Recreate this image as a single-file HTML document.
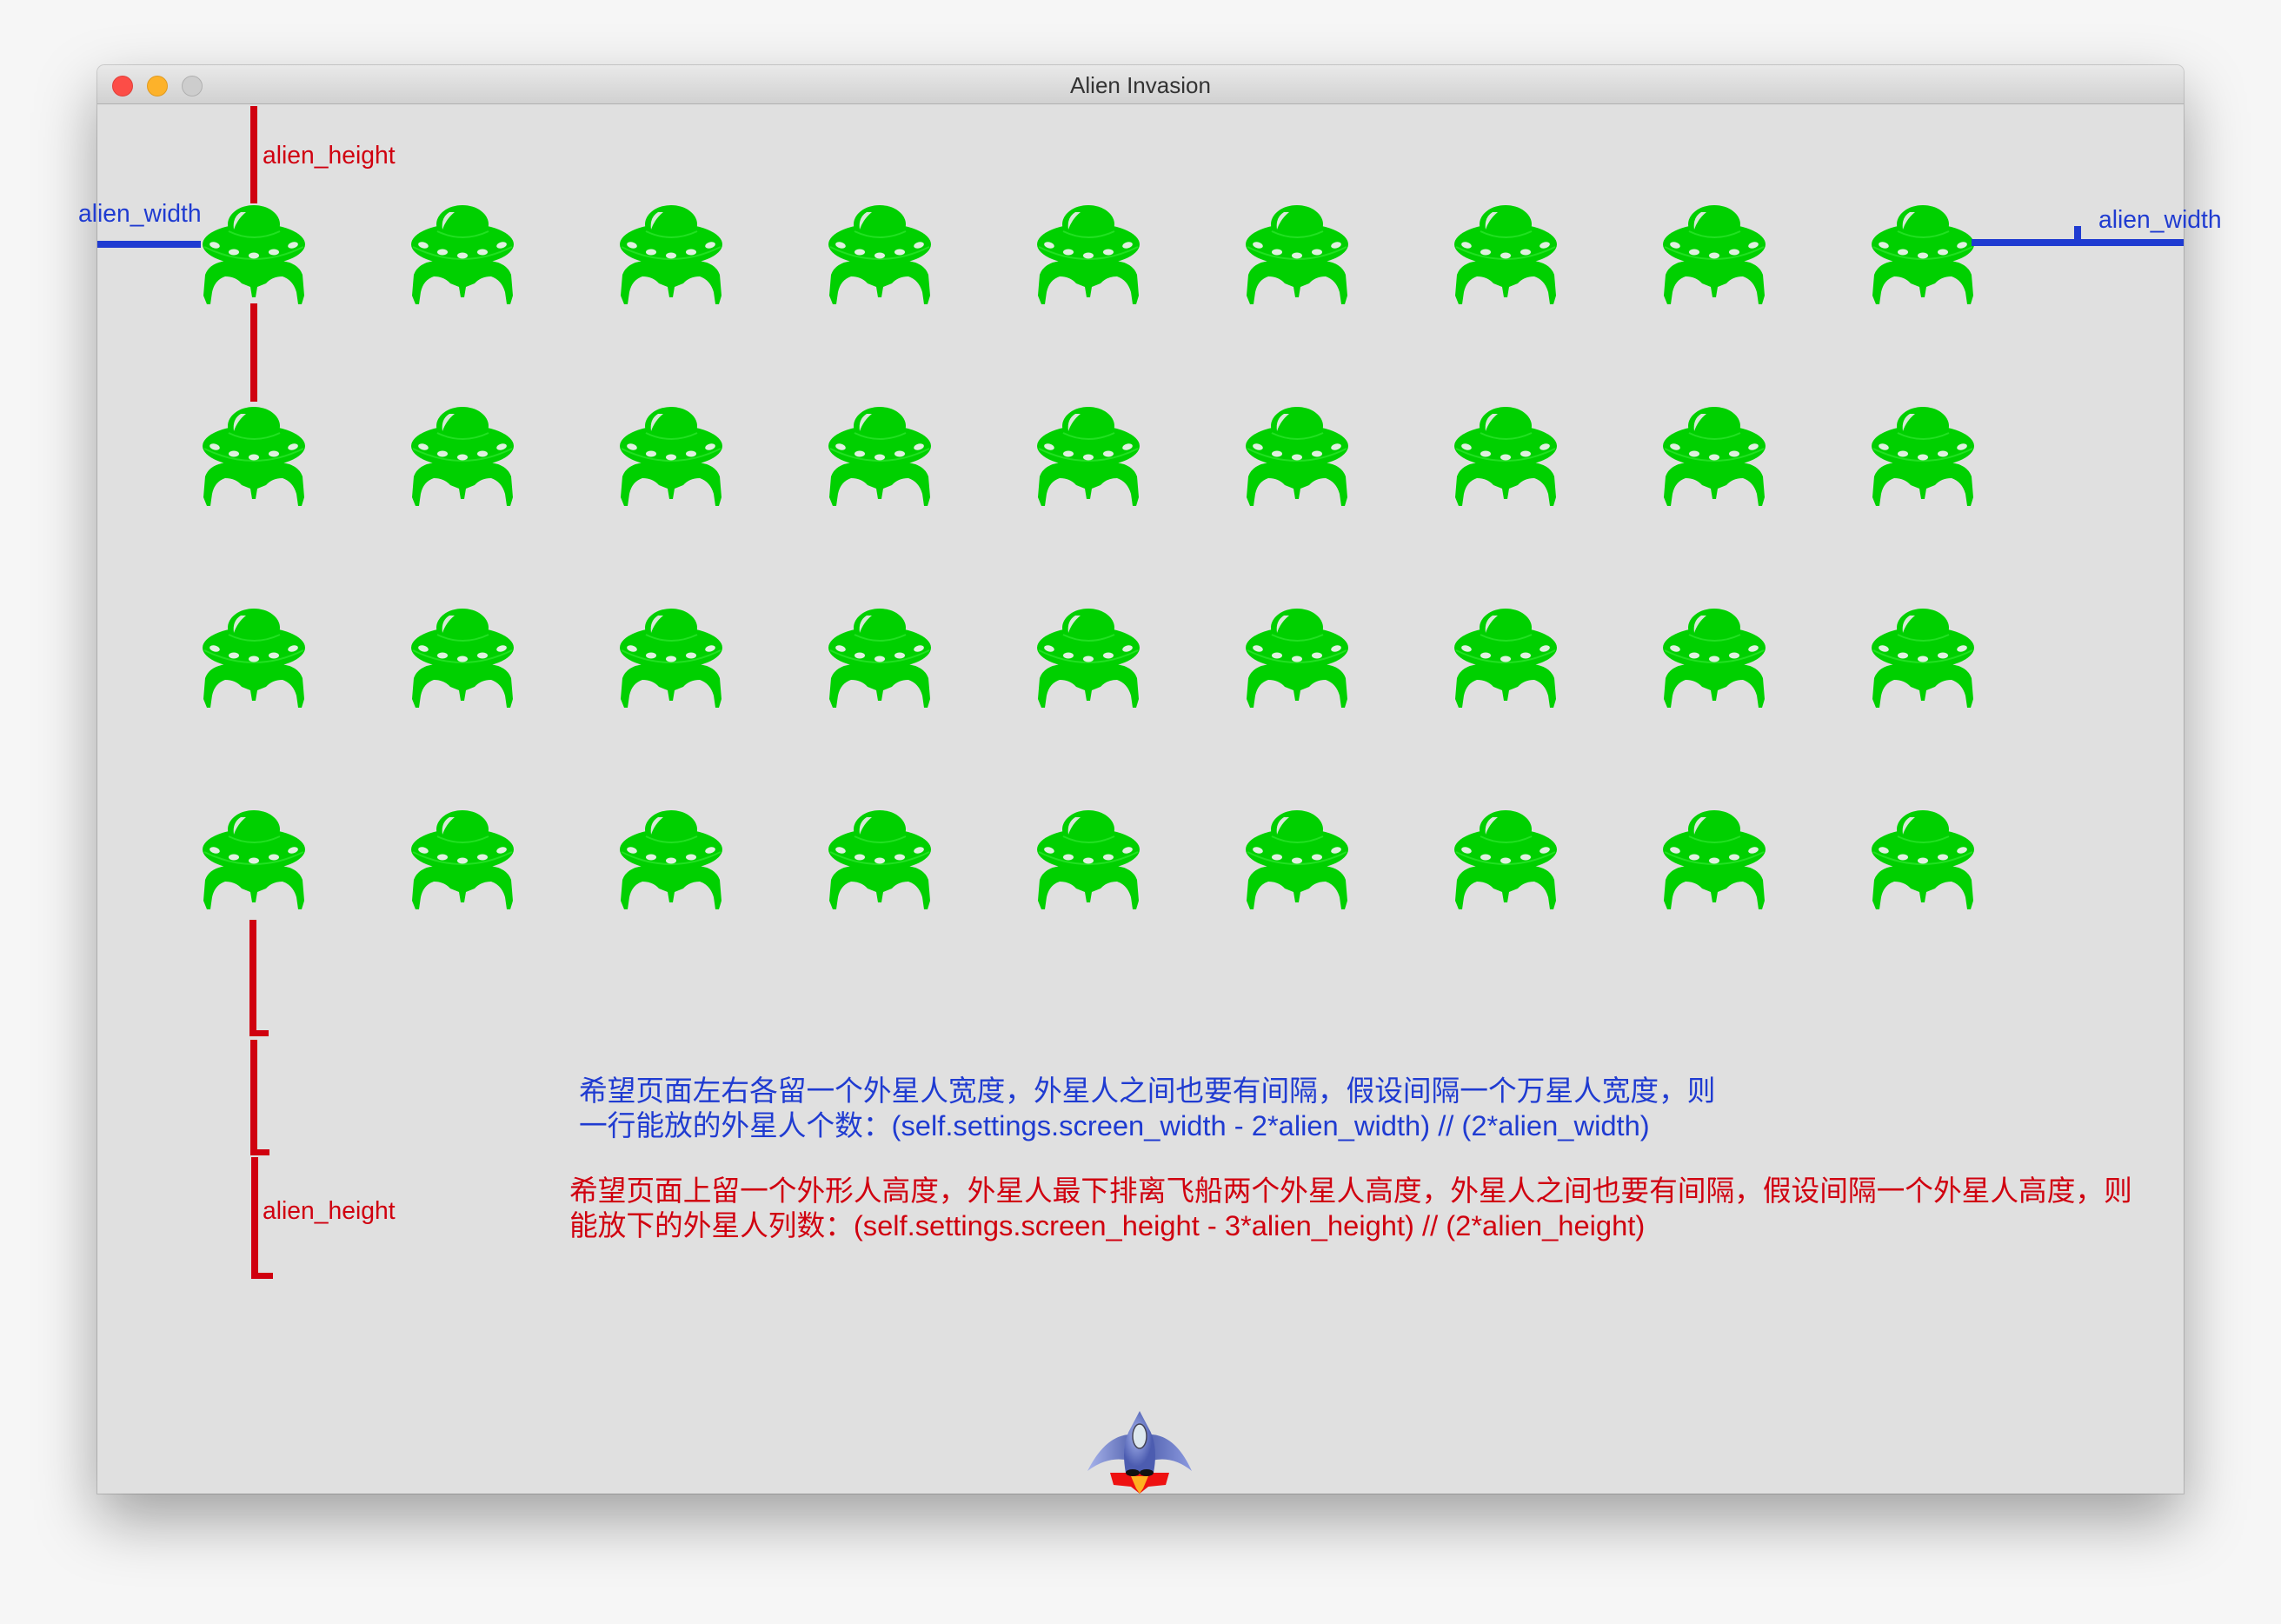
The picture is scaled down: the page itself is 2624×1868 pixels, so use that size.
<!DOCTYPE html>
<html><head><meta charset="utf-8"><style>
html,body{margin:0;padding:0;}
body{width:2624px;height:1868px;background:#f6f6f6;position:relative;overflow:hidden;font-family:"Liberation Sans","Noto Sans CJK SC",sans-serif;}
.win{position:absolute;left:112px;top:75px;width:2400px;height:1643px;background:#e0e0e0;box-shadow:0 30px 70px rgba(0,0,0,0.35),0 0 0 1px rgba(0,0,0,0.15);border-radius:8px 8px 0 0;overflow:hidden;}
.tb{position:absolute;left:0;top:0;width:100%;height:44px;background:linear-gradient(#e9e9e9,#d1d1d1);border-bottom:1px solid #b0b0b0;}
.tl{position:absolute;top:12px;width:22px;height:22px;border-radius:50%;}
.title{position:absolute;left:0;right:0;top:8px;text-align:center;font-size:26px;color:#333;}
.a{position:absolute;}
.ln{position:absolute;}
.r{background:#d0000f;}
.b{background:#1f3bd1;}
.lbl{position:absolute;font-size:28.3px;white-space:nowrap;}
.txt{position:absolute;font-size:32.7px;line-height:40px;white-space:nowrap;}
</style></head><body>
<svg width="0" height="0" style="position:absolute">
<defs>
<symbol id="al" viewBox="0 0 118 115">
<path fill="#00d000" d="M3,80 Q8,66 28,64 L90,64 Q110,66 115,80 L117,104 L114,114 L110,114 L108,100 Q104,86 92,82 Q80,82 73,90 L63,94 L61,106 L57,106 L55,94 L45,90 Q38,82 26,82 Q14,86 11,100 L9,114 L5,114 L1,104 Z"/>
<ellipse cx="59" cy="45" rx="59" ry="24" fill="#00d000"/>
<ellipse cx="59" cy="22" rx="30" ry="22" fill="#00d000"/>
<path d="M30,30 Q59,44 89,30" stroke="#22e022" stroke-width="2" fill="none"/>
<path d="M2,48 Q59,76 116,48" stroke="#22e022" stroke-width="2" fill="none"/>
<path d="M44,8 Q34,14 36,28 Q40,16 50,8 Z" fill="#d8e8d8"/>
<ellipse cx="14" cy="46" rx="6" ry="3.5" fill="#e0f0e0" transform="rotate(15 14 46)"/>
<ellipse cx="36" cy="54" rx="6" ry="3.5" fill="#e0f0e0"/>
<ellipse cx="59" cy="58" rx="6" ry="3.5" fill="#e0f0e0"/>
<ellipse cx="82" cy="54" rx="6" ry="3.5" fill="#e0f0e0"/>
<ellipse cx="104" cy="46" rx="6" ry="3.5" fill="#e0f0e0" transform="rotate(-15 104 46)"/>
</symbol>
</defs></svg>
<div class="win">
<div class="tb">
<div class="tl" style="left:17px;background:#fc4d47;border:1px solid #e0403a;"></div>
<div class="tl" style="left:57px;background:#fdb22a;border:1px solid #e09a20;"></div>
<div class="tl" style="left:97px;background:#cdcdcd;border:1px solid #b0b0b0;"></div>
<div class="title">Alien Invasion</div>
</div>
</div>
<div id="aliens"></div>
<script>
var h='';
for(var r=0;r<4;r++)for(var c=0;c<9;c++){h+='<svg class="a" style="left:'+(233+c*240)+'px;top:'+(236+r*232)+'px" width="118" height="115"><use href="#al"/></svg>';}
document.getElementById('aliens').innerHTML=h;
</script>
<div class="ln r" style="left:288px;top:122px;width:8px;height:112px"></div>
<div class="ln r" style="left:288px;top:349px;width:8px;height:113px"></div>
<div class="lbl" style="left:302px;top:162px;color:#d0000f">alien_height</div>
<div class="ln b" style="left:112px;top:277px;width:119px;height:8px"></div>
<div class="lbl" style="left:90px;top:229px;color:#1f3bd1">alien_width</div>
<div class="ln b" style="left:2268px;top:275px;width:244px;height:8px"></div>
<div class="ln b" style="left:2386px;top:260px;width:8px;height:22px"></div>
<div class="lbl" style="left:2414px;top:236px;color:#1f3bd1">alien_width</div>
<div class="ln r" style="left:287px;top:1058px;width:8px;height:134px"></div>
<div class="ln r" style="left:287px;top:1185px;width:22px;height:7px"></div>
<div class="ln r" style="left:288px;top:1196px;width:8px;height:133px"></div>
<div class="ln r" style="left:288px;top:1322px;width:22px;height:7px"></div>
<div class="ln r" style="left:289px;top:1331px;width:8px;height:140px"></div>
<div class="ln r" style="left:292px;top:1464px;width:22px;height:7px"></div>
<div class="lbl" style="left:302px;top:1376px;color:#d0000f">alien_height</div>
<div class="txt" style="left:666px;top:1235px;color:#1f3bd1">希望页面左右各留一个外星人宽度，外星人之间也要有间隔，假设间隔一个万星人宽度，则<br>一行能放的外星人个数：(self.settings.screen_width - 2*alien_width) // (2*alien_width)</div>
<div class="txt" style="left:655px;top:1350px;color:#d0000f">希望页面上留一个外形人高度，外星人最下排离飞船两个外星人高度，外星人之间也要有间隔，假设间隔一个外星人高度，则<br>能放下的外星人列数：(self.settings.screen_height - 3*alien_height) // (2*alien_height)</div>
<svg class="a" style="left:1251px;top:1622px" width="122" height="96" viewBox="0 0 122 96">
<defs>
<linearGradient id="wg" x1="0" x2="1"><stop offset="0" stop-color="#a8b4ec"/><stop offset="0.5" stop-color="#4a5aa8"/><stop offset="1" stop-color="#8c9ae0"/></linearGradient>
<radialGradient id="bg" cx="0.4" cy="0.4"><stop offset="0" stop-color="#a8b6ee"/><stop offset="1" stop-color="#4c5cb0"/></radialGradient>
</defs>
<path d="M0,70 Q20,30 48,28 L74,28 Q102,30 120,70 Q98,52 74,58 L48,58 Q24,52 0,70 Z" fill="url(#wg)"/>
<path d="M44,72 Q38,40 50,20 L60,1 L70,20 Q82,40 76,72 Z" fill="url(#bg)"/>
<ellipse cx="60" cy="30" rx="8" ry="14" fill="#dde8ee" stroke="#445" stroke-width="1.5"/>
<path d="M26,72 L94,72 L90,86 L70,88 L60,96 L50,88 L30,86 Z" fill="#ee1111"/>
<path d="M50,76 L70,76 L64,90 L60,96 L56,90 Z" fill="#ffb020"/>
<ellipse cx="52" cy="72" rx="8" ry="4" fill="#111"/>
<ellipse cx="68" cy="72" rx="8" ry="4" fill="#111"/>
</svg>
</body></html>
